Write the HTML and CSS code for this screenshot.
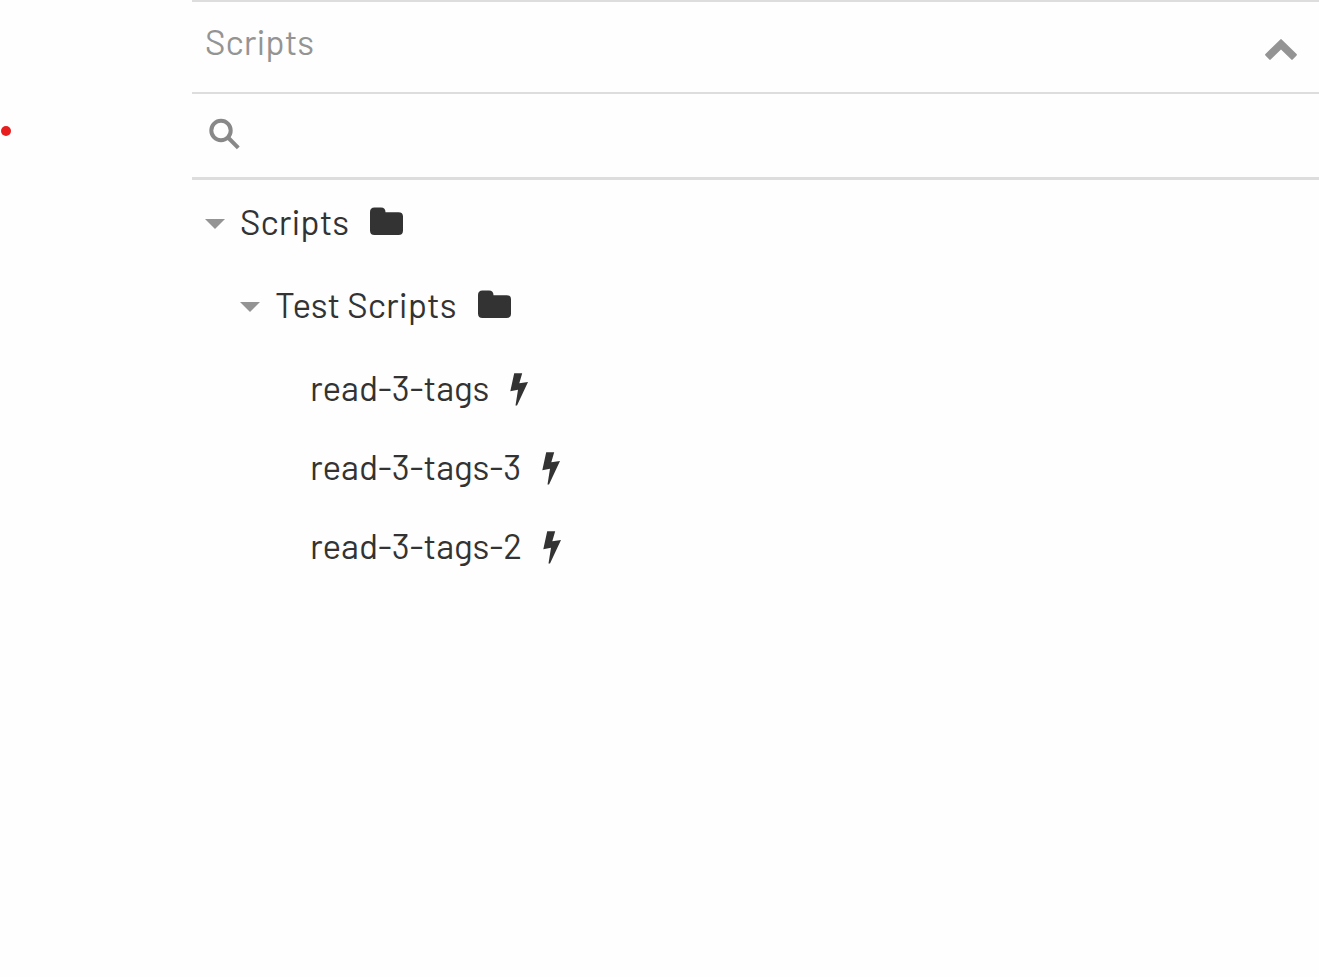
FILE: index.html
```html
<!DOCTYPE html>
<html lang="en">

<head>
    <meta charset="UTF-8">
    <meta name="viewport" content="width=device-width, initial-scale=1.0">
    <title>Scripts</title>
    <link rel="stylesheet" href="styles.css">
</head>

<body>
    <div class="layout">
        <aside class="rail">
            <span class="status-dot"></span>
        </aside>
        <main class="panel">
            <button type="button" class="panel-header" aria-expanded="true">
                <span class="panel-title">Scripts</span>
                <svg class="chevron" viewBox="0 0 32 22" aria-hidden="true">
                    <path d="M15.3 .4 Q16 -.2 16.7 .4 L31.6 15 Q32.2 15.7 31.6 16.4 L27.7 20.6 Q27 21.2 26.3 20.6 L16 10.5 L5.7 20.6 Q5 21.2 4.300 20.6 L.4 16.4 Q-.2 15.7 .4 15 Z" />
                </svg>
            </button>
            <label class="search">
                <svg class="search-icon" viewBox="0 0 32 32" aria-hidden="true">
                    <circle cx="12" cy="12.5" r="9.7" />
                    <path d="M18.5 19 L29.300 29.800" />
                </svg>
                <input type="text" class="search-input" aria-label="Search scripts">
            </label>
            <ul class="tree">
                <li>
                    <button type="button" class="row" aria-expanded="true">
                        <svg class="caret" viewBox="0 0 20 10" aria-hidden="true"><path d="M0 0 H20 L10 10 Z" /></svg>
                        <span class="name">Scripts</span>
                        <svg class="folder" viewBox="0 0 33 28" aria-hidden="true"><path d="M4.5 .5 H11 Q15.5 .5 15.5 5.2 H28.5 Q33 5.2 33 9.500 V23.5 Q33 28 28.5 28 H4.5 Q0 28 0 23.5 V5 Q0 .5 4.5 .5 Z" /></svg>
                    </button>
                    <ul class="branch">
                        <li>
                            <button type="button" class="row" aria-expanded="true">
                                <svg class="caret" viewBox="0 0 20 10" aria-hidden="true"><path d="M0 0 H20 L10 10 Z" /></svg>
                                <span class="name">Test Scripts</span>
                                <svg class="folder" viewBox="0 0 33 28" aria-hidden="true"><path d="M4.5 .5 H11 Q15.5 .5 15.5 5.2 H28.5 Q33 5.2 33 9.500 V23.5 Q33 28 28.5 28 H4.5 Q0 28 0 23.5 V5 Q0 .5 4.5 .5 Z" /></svg>
                            </button>
                            <ul class="branch leaves">
                                <li>
                                    <a href="#" class="row leaf">
                                        <span class="name">read-3-tags</span>
                                        <svg class="bolt" viewBox="0 0 18 33" aria-hidden="true"><path d="M4.2 .3 H12.2 L9.3 10.3 L18 9 L7 32.5 H5.5 L8 16.8 L.3 18.3 Z" /></svg>
                                    </a>
                                </li>
                                <li>
                                    <a href="#" class="row leaf">
                                        <span class="name">read-3-tags-3</span>
                                        <svg class="bolt" viewBox="0 0 18 33" aria-hidden="true"><path d="M4.2 .3 H12.2 L9.3 10.3 L18 9 L7 32.5 H5.5 L8 16.8 L.3 18.3 Z" /></svg>
                                    </a>
                                </li>
                                <li>
                                    <a href="#" class="row leaf">
                                        <span class="name">read-3-tags-2</span>
                                        <svg class="bolt" viewBox="0 0 18 33" aria-hidden="true"><path d="M4.2 .3 H12.2 L9.3 10.3 L18 9 L7 32.5 H5.5 L8 16.8 L.3 18.3 Z" /></svg>
                                    </a>
                                </li>
                            </ul>
                        </li>
                    </ul>
                </li>
            </ul>
        </main>
    </div>
</body>

</html>
```

FILE: styles.css
```css
* {
    box-sizing: border-box;
}

body {
    margin: 0;
    background-color: #fefefe;
    color: #333;
    font-family: Barlow, Roboto, sans-serif;
    font-size: 35px;
    font-weight: 400;
    line-height: 44px;
}

button,
input {
    font: inherit;
    color: inherit;
    background: none;
    border: none;
    padding: 0;
}

button {
    cursor: pointer;
    text-align: left;
}

ul {
    list-style: none;
    margin: 0;
    padding: 0;
}

svg {
    flex-shrink: 0;
    fill: currentColor;
}

.layout {
    display: flex;
    min-height: 100vh;
}

.rail {
    width: 192px;
    flex-shrink: 0;
    padding: 126px 0 0 1px;
}

.status-dot {
    display: block;
    width: 10px;
    height: 10px;
    border-radius: 50%;
    background-color: #e81e1e;
}

.panel {
    flex: 1;
    min-width: 0;
}

.panel-header {
    display: flex;
    align-items: flex-start;
    justify-content: space-between;
    width: 100%;
    padding: 17px 22px 29px 13px;
    border-top: 2px solid #ddd;
    border-bottom: 2px solid #ddd;
    color: #949494;
}

.chevron {
    width: 32px;
    height: 22px;
    margin-top: 20px;
}

.search {
    display: flex;
    align-items: center;
    gap: 16px;
    height: 86px;
    padding: 0 16px 4px 17px;
    border-bottom: 3px solid #ddd;
    color: #888;
}

.search-icon {
    width: 32px;
    height: 32px;
    fill: none;
    stroke: currentColor;
    stroke-width: 4;
}

.search-input {
    flex: 1;
    min-width: 0;
    outline: none;
    color: #333;
}

.tree {
    padding-left: 13px;
}

.branch {
    padding-left: 35px;
}

.leaves {
    padding-top: 2px;
}

.row {
    display: flex;
    align-items: center;
    width: 100%;
    height: 83px;
    padding-bottom: 2px;
    color: inherit;
    text-decoration: none;
}

.leaf {
    height: 79px;
    padding-left: 35px;
}

.name {
    white-space: nowrap;
}

.caret {
    width: 20px;
    height: 10px;
    margin-top: 7px;
    margin-right: 15px;
    color: #949494;
}

.folder {
    width: 33px;
    height: 28px;
    margin-left: 21px;
}

.bolt {
    width: 18px;
    height: 33px;
    margin-top: 5px;
    margin-left: 21px;
}
```
